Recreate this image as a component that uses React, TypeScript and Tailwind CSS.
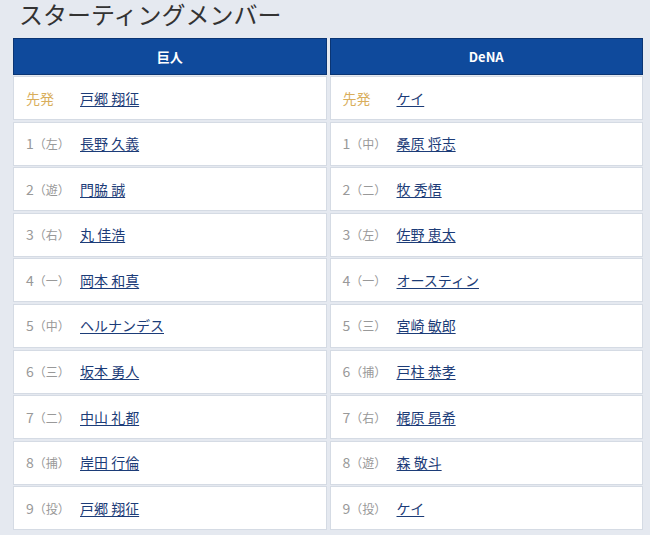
import React from 'react';

type Player = { order: string; pos?: string; name: string };

const giants: Player[] = [
  { order: '先発', name: '戸郷 翔征' },
  { order: '1', pos: '左', name: '長野 久義' },
  { order: '2', pos: '遊', name: '門脇 誠' },
  { order: '3', pos: '右', name: '丸 佳浩' },
  { order: '4', pos: '一', name: '岡本 和真' },
  { order: '5', pos: '中', name: 'ヘルナンデス' },
  { order: '6', pos: '三', name: '坂本 勇人' },
  { order: '7', pos: '二', name: '中山 礼都' },
  { order: '8', pos: '捕', name: '岸田 行倫' },
  { order: '9', pos: '投', name: '戸郷 翔征' },
];

const dena: Player[] = [
  { order: '先発', name: 'ケイ' },
  { order: '1', pos: '中', name: '桑原 将志' },
  { order: '2', pos: '二', name: '牧 秀悟' },
  { order: '3', pos: '左', name: '佐野 恵太' },
  { order: '4', pos: '一', name: 'オースティン' },
  { order: '5', pos: '三', name: '宮崎 敏郎' },
  { order: '6', pos: '捕', name: '戸柱 恭孝' },
  { order: '7', pos: '右', name: '梶原 昂希' },
  { order: '8', pos: '遊', name: '森 敬斗' },
  { order: '9', pos: '投', name: 'ケイ' },
];

function TeamColumn({ team, players }: { team: string; players: Player[] }) {
  return (
    <div className="flex flex-col gap-[1.6px]">
      {/* チーム名 */}
      <div className="h-[37px] mb-[-0.6px] bg-[#0f4a9c] border border-[#0a3574] flex items-center justify-center text-white font-bold text-[13px]">
        {team}
      </div>
      {players.map((p, i) => (
        <div
          key={i}
          className="h-[44px] bg-white border border-[#d5dbe4] flex items-center pl-[12px] text-[14px]"
        >
          <span className="w-[54px] shrink-0 flex items-baseline">
            {p.pos ? (
              <>
                <span className="text-[#999]">{p.order}</span>
                <span className="text-[#999] text-[12px]">（{p.pos}）</span>
              </>
            ) : (
              <span className="text-[#d9ae5c]">{p.order}</span>
            )}
          </span>
          <a href="#" className="text-[#1c3c78] underline underline-offset-2">
            {p.name}
          </a>
        </div>
      ))}
    </div>
  );
}

export default function App() {
  return (
    <div
      className="w-[650px] h-[535px] overflow-hidden bg-[#e5e9f0]"
      style={{ fontFamily: '"Noto Sans CJK JP", "Noto Sans", sans-serif' }}
    >
      <h2 className="h-[36px] pl-[19px] text-[24px] leading-[28px] text-[#333] font-normal mb-[2px]">
        スターティングメンバー
      </h2>
      <div className="ml-[13px] w-[630px] grid grid-cols-2 gap-x-[3px]">
        <TeamColumn team="巨人" players={giants} />
        <TeamColumn team="DeNA" players={dena} />
      </div>
    </div>
  );
}
